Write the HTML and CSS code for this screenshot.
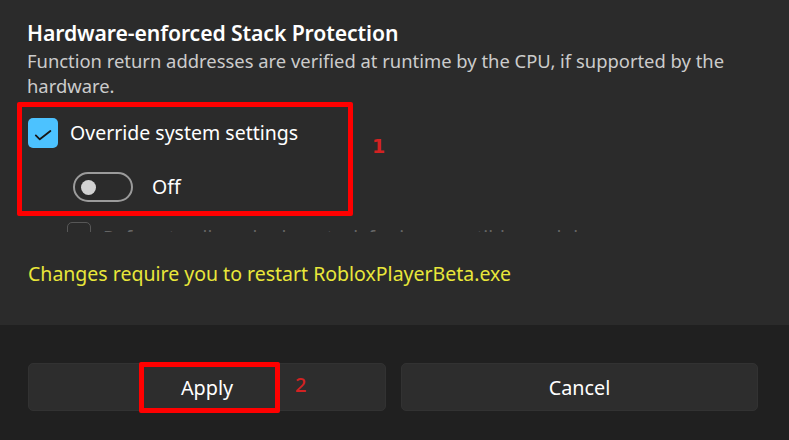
FILE: index.html
```html
<!DOCTYPE html>
<html>
<head>
<meta charset="utf-8">
<link rel="stylesheet" href="styles.css">
</head>
<body>
<div class="dialog">
  <section class="content">
    <h1 class="title">Hardware-enforced Stack Protection</h1>
    <p class="desc">Function return addresses are verified at runtime by the CPU, if supported by the hardware.</p>
    <div class="check-row">
      <span class="checkbox">
        <svg width="30" height="30" viewBox="0 0 30 30"><path d="M7.8 17.4 L11.8 21.3 L22.4 13" fill="none" stroke="#171717" stroke-width="1.8" stroke-linecap="round" stroke-linejoin="round"/></svg>
      </span>
      <span class="label">Override system settings</span>
    </div>
    <div class="toggle-row">
      <span class="toggle"><span class="knob"></span></span>
      <span class="label">Off</span>
    </div>
    <div class="ghost-row">
      <span class="ghost-box"></span>
      <span class="ghost-text">Refuse to allow shadow stack for incompatible modules</span>
    </div>
    <p class="notice">Changes require you to restart RobloxPlayerBeta.exe</p>
  </section>
  <footer class="footer">
    <button class="btn">Apply</button>
    <button class="btn">Cancel</button>
  </footer>
  <div class="annot annot-1"></div>
  <span class="annot-num num-1">1</span>
  <div class="annot annot-2"></div>
  <span class="annot-num num-2">2</span>
</div>
</body>
</html>
```
FILE: styles.css
```css
* { box-sizing: border-box; }
html, body { margin: 0; padding: 0; }
body {
  width: 789px;
  height: 440px;
  overflow: hidden;
  background: #202020;
  font-family: "Noto Sans", "Open Sans", sans-serif;
  color: #ffffff;
}
.dialog {
  position: relative;
  width: 789px;
  height: 440px;
}
.content {
  height: 325px;
  background: #2b2b2b;
  padding: 20px 27px 0 27px;
}
.title {
  margin: 0;
  font-size: 21.2px;
  font-weight: 600;
  line-height: 25px;
  letter-spacing: -0.1px;
}
.desc {
  margin: 4px 0 0 0;
  font-size: 18.4px;
  line-height: 24.5px;
  color: #cccccc;
  width: 735px;
}
.check-row {
  margin-top: 20px;
  display: flex;
  align-items: center;
  gap: 12px;
  height: 30px;
}
.checkbox {
  width: 30px;
  height: 30px;
  margin-left: 1px;
  border-radius: 5px;
  background: #4cc2ff;
  display: flex;
}
.label {
  font-size: 19.5px;
  line-height: 24px;
  color: #ffffff;
}
.toggle-row {
  margin-top: 24px;
  margin-left: 46px;
  display: flex;
  align-items: center;
  gap: 19px;
  height: 30px;
}
.toggle {
  width: 60px;
  height: 30px;
  border: 2px solid #9b9b9b;
  border-radius: 15px;
  display: flex;
  align-items: center;
  padding-left: 6px;
}
.knob {
  width: 15px;
  height: 15px;
  border-radius: 50%;
  background: #d2d2d2;
}
.ghost-row {
  margin-top: 20px;
  margin-left: 40px;
  height: 10px;
  overflow: hidden;
  display: flex;
  align-items: flex-start;
  gap: 12px;
  opacity: 0.4;
}
.ghost-box {
  flex: none;
  width: 24px;
  height: 24px;
  border: 1.5px solid #9a9a9a;
  border-radius: 5px;
}
.ghost-text {
  font-size: 19px;
  line-height: 24px;
  margin-top: 4px;
  color: #bdbdbd;
  white-space: nowrap;
}
.notice {
  margin: 30px 0 0 1px;
  font-size: 19.5px;
  line-height: 24px;
  color: #e9e73a;
}
.footer {
  height: 115px;
  padding: 38px 32px 0 28px;
  display: grid;
  grid-template-columns: 358px 357px;
  column-gap: 15px;
  align-content: start;
}
.btn {
  height: 48px;
  background: #2d2d2d;
  border: 1px solid #323232;
  border-radius: 5px;
  color: #ffffff;
  font-family: "Noto Sans", "Open Sans", sans-serif;
  font-size: 19.8px;
  padding: 0;
}
.annot {
  position: absolute;
  border: 5px solid #ff0000;
  border-radius: 2px;
}
.annot-1 { left: 17px; top: 102px; width: 336px; height: 114px; }
.annot-2 { left: 139px; top: 362px; width: 141px; height: 51px; }
.annot-num {
  position: absolute;
  font-family: "DejaVu Sans", sans-serif;
  font-weight: bold;
  color: #d32222;
  line-height: 1;
}
.num-1 { left: 372px; top: 137px; font-size: 19px; }
.num-2 { left: 295px; top: 375px; font-size: 20px; font-family: "Noto Sans", sans-serif; font-weight: 500; }
```
